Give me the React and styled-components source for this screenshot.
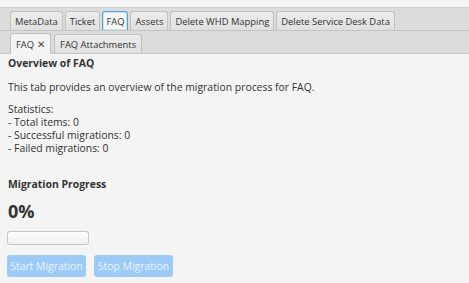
import React from 'react';
import styled, { createGlobalStyle } from 'styled-components';

const GlobalStyle = createGlobalStyle`
  html, body {
    margin: 0;
    padding: 0;
    background: #f4f4f4;
  }
  body {
    font-family: "Open Sans", "Noto Sans", sans-serif;
    font-size: 10.4px;
    color: #333333;
  }
`;

const outerTabs = ['MetaData', 'Ticket', 'FAQ', 'Assets', 'Delete WHD Mapping', 'Delete Service Desk Data'];

function App() {
  return (
    <>
      <GlobalStyle />
      <Page>
        <HeaderBand>
          {outerTabs.map(name => (
            <OuterTab key={name} $selected={name === 'FAQ'}>{name}</OuterTab>
          ))}
        </HeaderBand>
        <InnerBand>
          <InnerTab $selected>
            FAQ <Close>✕</Close>
          </InnerTab>
          <InnerTab>FAQ Attachments</InnerTab>
        </InnerBand>
        <Content>
          <Title>Overview of FAQ</Title>
          <Paragraph>This tab provides an overview of the migration process for FAQ.</Paragraph>
          <Stats>
            <div>Statistics:</div>
            <div>- Total items: 0</div>
            <div>- Successful migrations: 0</div>
            <div>- Failed migrations: 0</div>
          </Stats>
          <SectionTitle>Migration Progress</SectionTitle>
          <Percent>0%</Percent>
          <ProgressBar />
          <Buttons>
            <Button disabled>Start Migration</Button>
            <Button disabled>Stop Migration</Button>
          </Buttons>
        </Content>
      </Page>
    </>
  );
}

const Page = styled.div`
  width: 469px;
  height: 283px;
  overflow: hidden;
  padding-top: 7px;
  box-sizing: border-box;
`;

const HeaderBand = styled.div`
  display: flex;
  align-items: flex-end;
  gap: 2px;
  height: 22px;
  padding: 0 0 0 10px;
  background: #dcdcdc;
  border-top: 1px solid #cfcfcf;
  border-bottom: 1px solid #c4c4c4;
`;

const OuterTab = styled.div`
  height: 19px;
  box-sizing: border-box;
  padding: 0 ${p => (p.$selected ? '3px' : '4px')};
  display: flex;
  align-items: center;
  border: 1px solid ${p => (p.$selected ? '#4aa6e0' : '#c2c2c2')};
  border-bottom: none;
  border-radius: 3px 3px 0 0;
  background: ${p => (p.$selected ? '#f7f7f7' : 'linear-gradient(#ececec, #e0e0e0)')};
  box-shadow: ${p => (p.$selected ? 'inset 0 0 0 1px #c9e6f7' : 'none')};
  color: #333333;
  font-size: 9.4px;
  white-space: nowrap;
`;

const InnerBand = styled.div`
  display: flex;
  align-items: flex-end;
  gap: 3px;
  height: 22px;
  padding-left: 10px;
  background: #dcdcdc;
  border-bottom: 1px solid #c8c8c8;
`;

const InnerTab = styled.div`
  height: ${p => (p.$selected ? '21px' : '19px')};
  box-sizing: border-box;
  padding: 0 5px;
  display: flex;
  align-items: center;
  gap: 3px;
  border: 1px solid #c2c2c2;
  border-bottom: none;
  border-radius: 3px 3px 0 0;
  background: ${p => (p.$selected ? '#f4f4f4' : 'linear-gradient(#ececec, #e0e0e0)')};
  margin-bottom: ${p => (p.$selected ? '-1px' : '0')};
  color: #333333;
  font-size: 9.4px;
  white-space: nowrap;
`;

const Close = styled.span`
  font-size: 10px;
  color: #444444;
`;

const Content = styled.div`
  padding: 2px 8px 0 8px;
`;

const Title = styled.div`
  font-weight: bold;
  line-height: 14px;
`;

const Paragraph = styled.div`
  margin-top: 10px;
  line-height: 14px;
`;

const Stats = styled.div`
  margin-top: 9px;
  line-height: 13px;
`;

const SectionTitle = styled.div`
  margin-top: 22px;
  font-weight: bold;
  line-height: 14px;
`;

const Percent = styled.div`
  margin-top: 9px;
  font-size: 18px;
  font-weight: bold;
  line-height: 22px;
  color: #333333;
`;

const ProgressBar = styled.div`
  margin-top: 9px;
  margin-left: -1px;
  width: 82px;
  height: 14px;
  box-sizing: border-box;
  border: 1px solid #c6c6c6;
  border-radius: 3px;
  background: linear-gradient(#fdfdfd, #f0f0f0);
`;

const Buttons = styled.div`
  display: flex;
  gap: 8px;
  margin-top: 10px;
  margin-left: -1px;
`;

const Button = styled.button`
  width: 79px;
  height: 22px;
  padding: 0;
  border: none;
  border-radius: 3px;
  background: #9ccbf7;
  color: #e9f3fd;
  font-family: "Open Sans", "Noto Sans", sans-serif;
  font-size: 10.4px;
  white-space: nowrap;
`;

export default App;
